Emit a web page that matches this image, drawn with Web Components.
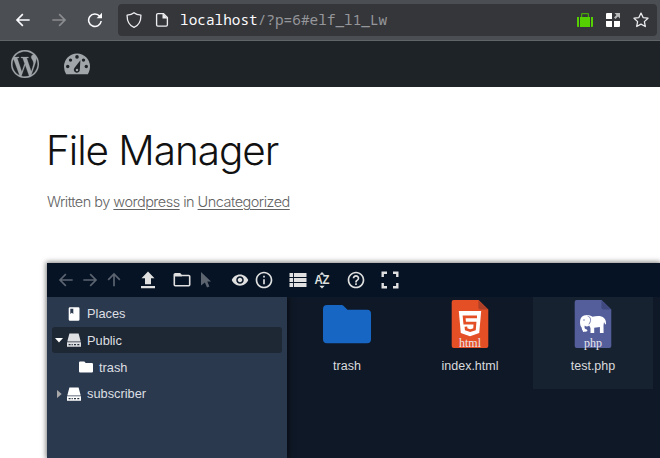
<!DOCTYPE html>
<html lang="en">
<head>
<meta charset="utf-8">
<title>File Manager</title>
<style>
html,body{margin:0;background:#fff;overflow:hidden;height:458px}
</style>
</head>
<body>
<app-page></app-page>
<script>
const ICONS = {
  back: ['0 0 24 24', '<path d="M20 12H5M11.800 5L4.800 12l7 7" fill="none" stroke="currentColor" stroke-width="2"/>'],
  reload: ['0 0 16 16', '<path d="M14.200 9A6.300 6.300 0 1 1 12.800 4.200" fill="none" stroke="currentColor" stroke-width="1.550"/><path d="M15 .8V6.200H9.600z" fill="currentColor"/>'],
  shield: ['0 0 16 16', '<path d="M8 .8C6.300 2.300 3.800 3 1.100 3.200C1 8.500 2.500 13 8 15.300C13.500 13 15 8.500 14.900 3.200C12.200 3 9.700 2.300 8 .8z" fill="none" stroke="currentColor" stroke-width="1.300" stroke-linejoin="round"/>'],
  page: ['0 0 14 16', '<path d="M2.900 1.600H8.500L12.400 5.500V12.800a1.300 1.300 0 0 1-1.300 1.300H2.900a1.300 1.300 0 0 1-1.300-1.300V2.900a1.300 1.300 0 0 1 1.300-1.300z" fill="none" stroke="currentColor" stroke-width="1.350"/><path d="M7.500 1.200V6.500H12.800z" fill="currentColor"/>'],
  bag: ['0 0 16 14', '<path d="M0 4h2v10H1a1 1 0 0 1-1-1zM14 4h2v9a1 1 0 0 1-1 1h-1zM3 4h10v10H3z" fill="#55d000"/><path d="M4.600 4V1.200a.6.600 0 0 1 .6-.6h5.600a.6.600 0 0 1 .6.600V4" fill="none" stroke="#48a80b" stroke-width="1.200"/>'],
  grid: ['0 0 14 14', '<path d="M1 0H6V6H0V1a1 1 0 0 1 1-1zM0 8H6v6H1a1 1 0 0 1-1-1zM8 8h6v5a1 1 0 0 1-1 1H8z" fill="#fff"/><path d="M8.500 0H14v5.500L12 3.600 9.500 6.100 8 4.600l2.500-2.500z" fill="#b9bbbb"/>'],
  star: ['0 0 16 16', '<path d="M8 1.100l2.100 4.500 4.900.6-3.600 3.400.9 4.900L8 12.100l-4.300 2.400.9-4.900L1 6.200l4.900-.6z" fill="none" stroke="currentColor" stroke-width="1.300" stroke-linejoin="round"/>'],
  wordpress: ['0 0 24 24', '<path fill="currentColor" stroke="currentColor" stroke-width=".2" d="M21.469 6.825c.84 1.537 1.318 3.300 1.318 5.175 0 3.979-2.156 7.456-5.363 9.325l3.295-9.527c.615-1.540.820-2.771.820-3.864 0-.405-.026-.780-.070-1.110m-7.981.105c.647-.030 1.232-.105 1.232-.105.582-.075.514-.930-.067-.899 0 0-1.755.135-2.880.135-1.064 0-2.850-.150-2.850-.150-.585-.030-.661.855-.075.885 0 0 .540.061 1.125.090l1.680 4.605-2.370 7.080L5.354 6.900c.649-.030 1.234-.100 1.234-.100.585-.075.516-.930-.065-.896 0 0-1.746.138-2.874.138-.200 0-.438-.008-.690-.015C4.911 3.150 8.235 1.215 12 1.215c2.809 0 5.365 1.072 7.286 2.833-.046-.003-.091-.009-.141-.009-1.060 0-1.812.923-1.812 1.914 0 .890.513 1.643 1.060 2.531.411.720.890 1.643.890 2.977 0 .915-.354 1.994-.821 3.479l-1.075 3.585-3.900-11.610.001.014zM12 22.784c-1.059 0-2.081-.153-3.048-.437l3.237-9.406 3.315 9.087c.024.053.050.101.078.149-1.120.393-2.325.609-3.582.609M1.211 12c0-1.564.336-3.050.935-4.390L7.290 21.709C3.694 19.960 1.212 16.271 1.211 12M12 0C5.385 0 0 5.385 0 12s5.385 12 12 12 12-5.385 12-12S18.615 0 12 0"/>'],
  gauge: ['0 0 26 22', '<path d="M13 .5a13 13 0 0 1 13 13c0 2.900-.8 5.500-2.200 7.700H2.200A14 14 0 0 1 0 13.500a13 13 0 0 1 13-13z" fill="currentColor"/><g fill="#1d2327"><circle cx="13" cy="3.900" r="1.800"/><circle cx="6.500" cy="7.100" r="1.700"/><circle cx="19.500" cy="7.100" r="1.700"/><circle cx="3.700" cy="13.500" r="1.700"/><circle cx="22.300" cy="13.500" r="1.700"/><path d="M16.400 7.200L15.800 16.400a3 3 0 1 1-5.200-1.700z"/></g><circle cx="13" cy="17" r="1.250" fill="currentColor"/>'],
  up: ['0 0 24 24', '<path d="M12 19.500V5M5 11.800L12 4.800l7 7" fill="none" stroke="currentColor" stroke-width="2"/>'],
  upload: ['0 0 16 18', '<path d="M8 .500L14.500 7.300H11V13.300H5V7.300H1.500zM1 15H15V17.200H1z" fill="currentColor"/>'],
  folderline: ['0 0 18 16', '<path d="M2.300 1.800H6.800L8.500 3.500H15.700a1 1 0 0 1 1 1v8.300a1 1 0 0 1-1 1H2.300a1 1 0 0 1-1-1V2.800a1 1 0 0 1 1-1z" fill="none" stroke="currentColor" stroke-width="1.600"/><path d="M2 2h5l1.800 2.500H2z" fill="currentColor"/>'],
  cursor: ['0 0 12 18', '<path d="M1 1L11 10.500H7.300L9.400 15.600 7 16.600 4.900 11.400 1 14.600z" fill="currentColor"/>'],
  eye: ['0 0 24 24', '<path fill="currentColor" d="M12 4.500C7 4.500 2.730 7.610 1 12c1.730 4.390 6 7.500 11 7.500s9.270-3.110 11-7.500c-1.730-4.390-6-7.500-11-7.500zM12 17c-2.760 0-5-2.240-5-5s2.240-5 5-5 5 2.240 5 5-2.240 5-5 5zm0-8c-1.660 0-3 1.340-3 3s1.340 3 3 3 3-1.340 3-3-1.340-3-3-3z"/>'],
  info: ['0 0 24 24', '<path fill="currentColor" d="M11 17h2v-6h-2v6zm1-15C6.480 2 2 6.480 2 12s4.480 10 10 10 10-4.480 10-10S17.520 2 12 2zm0 18c-4.410 0-8-3.590-8-8s3.590-8 8-8 8 3.590 8 8-3.590 8-8 8zM11 9h2V7h-2v2z"/>'],
  list: ['0 0 18 14', '<path fill="currentColor" d="M.5 0h3.600v4H.5zM5 0h12.500v4H5zM.5 5h3.600v4H.5zM5 5h12.500v4H5zM.5 10h3.600v4H.5zM5 10h12.500v4H5z"/>'],
  az: ['0 0 16 18', '<path fill="currentColor" d="M5.300 3.700L8 1l2.700 2.700zM5.300 14.700h5.400L8 17.400z"/><text x="8" y="13.200" text-anchor="middle" textLength="15.200" lengthAdjust="spacingAndGlyphs" font-family="Liberation Sans, Arial, sans-serif" font-weight="700" font-size="12" fill="currentColor">AZ</text>'],
  help: ['0 0 24 24', '<path fill="currentColor" d="M11 18h2v-2h-2v2zm1-16C6.480 2 2 6.480 2 12s4.480 10 10 10 10-4.480 10-10S17.520 2 12 2zm0 18c-4.410 0-8-3.590-8-8s3.590-8 8-8 8 3.590 8 8-3.590 8-8 8zm0-14c-2.210 0-4 1.790-4 4h2c0-1.100.9-2 2-2s2 .9 2 2c0 2-3 1.750-3 5h2c0-2.250 3-2.500 3-5 0-2.210-1.790-4-4-4z"/>'],
  full: ['0 0 18 18', '<path d="M1.700 6V1.700H6M12 1.700h4.300V6M16.300 12v4.300H12M6 16.300H1.700V12" fill="none" stroke="currentColor" stroke-width="2.400"/>'],
  places: ['0 0 12 14', '<path d="M2 .3h8.300A1.300 1.300 0 0 1 11.500 1.600v10.800a1.300 1.300 0 0 1-1.300 1.300H2A1.300 1.300 0 0 1 .7 12.400V1.600A1.300 1.300 0 0 1 2 .3z" fill="#fff"/><path d="M2.300 1.700H5.300V7L3.800 5.700 2.300 7z" fill="#2b394f"/>'],
  drive: ['0 0 14 14', '<path d="M2.400.5h9.200L13.700 8.500H.3zM0 9.300h14v4.400H0z" fill="currentColor"/><path d="M1.600 11.600h2M4.600 11.600h1.200M7 11.600h2M10.300 11.600h2" stroke="#28313e" stroke-width="1.200"/>'],
  folder: ['0 0 14 12', '<path d="M1.300.5H5.300L6.700 2H12.700A1.200 1.200 0 0 1 14 3.200v7A1.200 1.200 0 0 1 12.700 11.500H1.300A1.200 1.200 0 0 1 0 10.300V1.700A1.200 1.200 0 0 1 1.300.5z" fill="#fff"/>'],
  open: ['0 0 8 5', '<path d="M0 0h8L4 4.500z" fill="#fff"/>'],
  closed: ['0 0 5 8', '<path d="M0 0v8l4.700-4z" fill="#a9a9aa"/>'],
  bigfolder: ['0 0 48 48', '<path d="M4 5H18.500a3 3 0 0 1 2.200.9L24.500 9.800H44a4 4 0 0 1 4 4V39.300a4 4 0 0 1-4 4H4a4 4 0 0 1-4-4V9a4 4 0 0 1 4-4z" fill="#1766c4"/>'],
  html: ['0 0 48 48', '<path d="M7.700 0H32.600L42.300 9.500V46a2 2 0 0 1-2 2H7.700a2 2 0 0 1-2-2V2a2 2 0 0 1 2-2z" fill="#e44f26"/><path d="M32.400.2V7.500a2 2 0 0 0 2 2H42z" fill="#ae4027"/><path d="M12.800 11H35.200L33.200 33 24 36.200 14.800 33z" fill="#fff"/><path d="M31 16.800H18.100L18.700 23.200H29L28.500 29.300 24.200 30.700 20.200 29.300 19.900 26.600" fill="none" stroke="#e44f26" stroke-width="2.700"/>'],
  php: ['0 0 48 48', '<path d="M7.700 0H32.600L42.300 9.500V46a2 2 0 0 1-2 2H7.700a2 2 0 0 1-2-2V2a2 2 0 0 1 2-2z" fill="#535e9b"/><path d="M32.400.2V7.500a2 2 0 0 0 2 2H42z" fill="#414a80"/><g transform="translate(-2)"><path d="M17 15.500C20 14.500 23 15 25.500 16.700 29 16 34 15 37 18c2 2 2 4 2 6.500l-1-.5-1-2-.5 3.500.1 7.500h-3.700v-6l-5.700.8v5.200H23.500v-5l-1.300-2.500c-1.600 1.500-3.300 1.200-4.400.1-.8 2.100.1 4.100 2.200 3.900l.5 1.500c-3.500 2-6-1-5.800-3.500-1.300-1.200-1.600-3-1.700-5.200C13 19 14.200 16.500 17 15.500z" fill="#fff"/><path d="M20.600 15.900c3.400 1.100 4 5 1.200 8.400" fill="none" stroke="#535e9b" stroke-width=".8"/><circle cx="17" cy="20" r=".7" fill="#535e9b"/><path d="M15.300 26.300l1.600 5.600" stroke="#fff" stroke-width="1.500"/></g>']
};

class UiElement extends HTMLElement {
  render(css, html) {
    const t = document.createElement('template');
    t.innerHTML = `<style>${css}</style>${html}`;
    this.attachShadow({mode: 'open'}).append(t.content.cloneNode(true));
  }
}

customElements.define('ui-icon', class extends UiElement {
  connectedCallback() {
    if (this.shadowRoot) return;
    const [box, body] = ICONS[this.getAttribute('name')];
    const w = this.getAttribute('w'), h = this.getAttribute('h') || w;
    this.render(`:host{display:block;flex:none;width:${w}px;height:${h}px}:host([flip]){transform:scaleX(-1)}svg{display:block}`,
      `<svg width="${w}" height="${h}" viewBox="${box}">${body}</svg>`);
  }
});

customElements.define('browser-bar', class extends UiElement {
  constructor() {
    super();
    this.render(`
      :host{display:flex;box-sizing:border-box;height:41px;background:#4b4e52;border-bottom:1px solid #606568;align-items:center;color:#fbfbfe;padding:0 3px 0 13px}
      .nav{display:flex;align-items:center;gap:16px;width:105px}
      .nav :last-child{margin-left:2px}
      .off{color:#8a8c8f}
      .url{flex:1;display:flex;align-items:center;box-sizing:border-box;height:32px;background:#35363a;border-radius:4px;padding:0 8px;color:#ececee}
      .text{font:14.400px/20px "Noto Sans Mono","DejaVu Sans Mono",monospace;margin-left:11px;color:#96979a;white-space:pre}
      .text b{font-weight:400;color:#fbfbfe}
      .end{margin-left:auto;display:flex;align-items:center;gap:13px}
      .page{margin-left:13px}`,
      `<div class="nav"><ui-icon name="back" w="20"></ui-icon><ui-icon class="off" name="back" w="20" flip></ui-icon><ui-icon name="reload" w="16"></ui-icon></div>
       <div class="url"><ui-icon name="shield" w="16"></ui-icon><ui-icon class="page" name="page" w="14" h="16"></ui-icon>
       <span class="text"><b>localhost</b>/?p=6#elf_l1_Lw</span>
       <div class="end"><ui-icon name="bag" w="16" h="14"></ui-icon><ui-icon name="grid" w="14"></ui-icon><ui-icon name="star" w="16"></ui-icon></div></div>`);
  }
});

customElements.define('admin-bar', class extends UiElement {
  constructor() {
    super();
    this.render(`:host{display:flex;height:46px;background:#1d2327;color:#a0a5aa;align-items:center;gap:25px;padding-left:11px}`,
      `<ui-icon name="wordpress" w="28"></ui-icon><ui-icon name="gauge" w="26" h="22"></ui-icon>`);
  }
});

customElements.define('post-header', class extends UiElement {
  constructor() {
    super();
    this.render(`
      :host{display:block;height:176px;box-sizing:border-box;padding:40px 0 0 46px;font-family:Inter,sans-serif}
      h1{margin:0;font-size:40.500px;line-height:48px;font-weight:360;color:#111;letter-spacing:-1.050px;white-space:nowrap}
      p{margin:17px 0 0 1px;font-size:14.500px;line-height:20px;font-weight:300;color:#636363;letter-spacing:-.52px;white-space:nowrap}
      a{color:inherit;text-decoration:underline;text-underline-offset:2px;text-decoration-thickness:1px}`,
      `<h1><slot></slot></h1><p>Written by <a>wordpress</a> in <a>Uncategorized</a></p>`);
  }
});

customElements.define('tool-group', class extends UiElement {
  constructor() {
    super();
    this.render(`:host{display:flex}:host([off]){color:#5c6470}
      ::slotted(span){width:24px;height:24px;display:flex;align-items:center;justify-content:center}`, `<slot></slot>`);
  }
});

customElements.define('tree-row', class extends UiElement {
  constructor() {
    super();
    this.render(`
      :host{display:flex;align-items:center;box-sizing:border-box;height:26px;padding-top:1px;margin-bottom:.67px;border-radius:3px;color:#dddfe2;font:12.800px/25px "Liberation Sans",Arial,sans-serif}
      :host([active]){background:#1e2734}
      .arrow{width:14px;margin-right:1px;display:flex;justify-content:center;flex:none}
      :host([child]) .arrow{width:26px}
      .icon{width:14px;margin-right:6px;display:flex;justify-content:center}`,
      `<span class="arrow"><slot name="arrow"></slot></span><span class="icon"><slot name="icon"></slot></span><slot></slot>`);
  }
});

customElements.define('file-tile', class extends UiElement {
  constructor() {
    super();
    this.render(`
      :host{display:flex;flex-direction:column;align-items:center;box-sizing:border-box;width:120px;height:92px;padding-top:3px;color:#d9dbde;font:12.500px/16px "Liberation Sans",Arial,sans-serif}
      :host([active]){background:#172230}
      .art{position:relative;height:48px}
      .kind{position:absolute;left:0;right:0;top:36px;text-align:center;font:12px/14px "Liberation Serif",serif;color:#e9e6ee}
      .name{margin-top:10px}`,
      `<div class="art"><slot name="icon"></slot><span class="kind"></span></div><span class="name"><slot></slot></span>`);
  }
  connectedCallback() {
    const k = this.shadowRoot.querySelector('.kind');
    if (!k) return;
    if (this.hasAttribute('kind')) k.textContent = this.getAttribute('kind'); else k.remove();
  }
});

customElements.define('file-manager', class extends UiElement {
  constructor() {
    super();
    this.render(`
      :host{display:block;margin-left:47px;height:195px;background:#0f1826;box-shadow:0 0 5px 1px rgba(0,0,0,.5)}
      .tools{height:34px;background:#061325;color:#dfe0df;display:flex;align-items:center;gap:10px;padding-left:7px}
      .off{color:#5c6470}
      .body{display:flex;height:161px;overflow:hidden}
      .tree{box-sizing:border-box;width:240px;flex:none;background:#2b394f;padding:3.300px 5px 0;box-shadow:1px 0 6px rgba(0,0,0,.6)}
      .files{display:flex;gap:3px}`,
      `<div class="tools">
        <tool-group off><span><ui-icon name="back" w="20"></ui-icon></span><span><ui-icon name="back" w="20" flip></ui-icon></span><span><ui-icon name="up" w="20"></ui-icon></span></tool-group>
        <tool-group><span><ui-icon name="upload" w="16" h="18"></ui-icon></span></tool-group>
        <tool-group><span><ui-icon name="folderline" w="18" h="16"></ui-icon></span><span class="off"><ui-icon name="cursor" w="12" h="18"></ui-icon></span></tool-group>
        <tool-group><span><ui-icon name="eye" w="18"></ui-icon></span><span><ui-icon name="info" w="20"></ui-icon></span></tool-group>
        <tool-group><span><ui-icon name="list" w="18" h="14"></ui-icon></span><span><ui-icon name="az" w="16" h="18"></ui-icon></span></tool-group>
        <tool-group><span><ui-icon name="help" w="20"></ui-icon></span></tool-group>
        <tool-group><span><ui-icon name="full" w="18"></ui-icon></span></tool-group>
      </div>
      <div class="body">
        <div class="tree">
          <tree-row><ui-icon slot="icon" name="places" w="12" h="14"></ui-icon>Places</tree-row>
          <tree-row active><ui-icon slot="arrow" name="open" w="8" h="5"></ui-icon><ui-icon slot="icon" name="drive" w="14"></ui-icon>Public</tree-row>
          <tree-row child><ui-icon slot="icon" name="folder" w="14" h="12"></ui-icon>trash</tree-row>
          <tree-row><ui-icon slot="arrow" name="closed" w="5" h="8"></ui-icon><ui-icon slot="icon" name="drive" w="14" style="color:#fff"></ui-icon>subscriber</tree-row>
        </div>
        <div class="files">
          <file-tile><ui-icon slot="icon" name="bigfolder" w="48"></ui-icon>trash</file-tile>
          <file-tile kind="html"><ui-icon slot="icon" name="html" w="48"></ui-icon>index.html</file-tile>
          <file-tile kind="php" active><ui-icon slot="icon" name="php" w="48"></ui-icon>test.php</file-tile>
        </div>
      </div>`);
  }
});

customElements.define('app-page', class extends UiElement {
  constructor() {
    super();
    this.render(`:host{display:block;width:660px;height:458px;overflow:hidden;background:#fff}`,
      `<browser-bar></browser-bar><admin-bar></admin-bar><post-header>File Manager</post-header><file-manager></file-manager>`);
  }
});
</script>
</body>
</html>
